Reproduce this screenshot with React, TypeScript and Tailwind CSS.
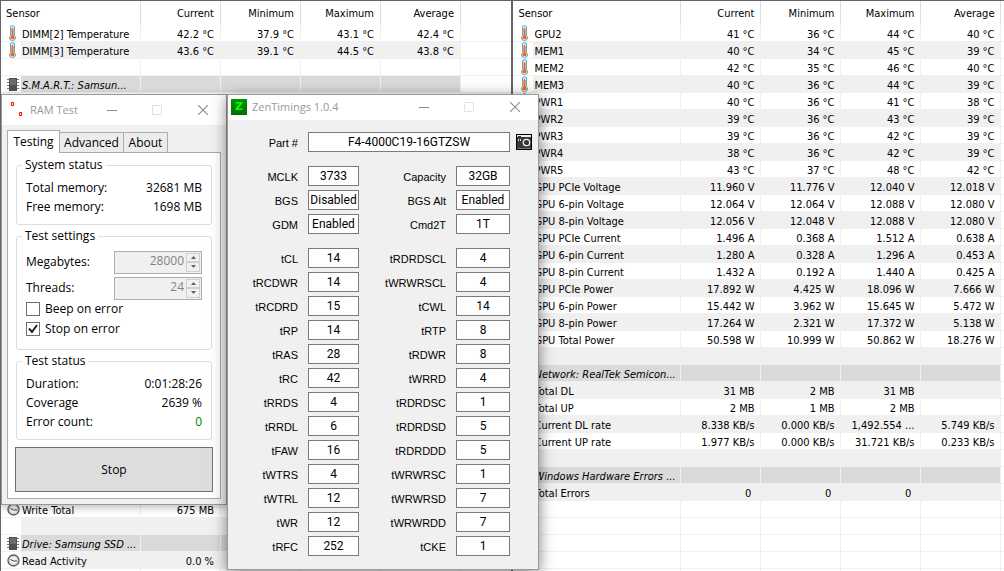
import type { ReactNode } from "react";
import clsx from "clsx";

type SensorIcon = "temp" | "chip" | "clock";

type SensorRow = {
  name?: string;
  icon?: SensorIcon;
  section?: boolean;
  values?: string[];
};

const ROW_COUNT = 33;

function blankRows(count: number): SensorRow[] {
  return Array.from({ length: count }, () => ({}));
}

const memorySensors: SensorRow[] = [
  { name: "DIMM[2] Temperature", icon: "temp", values: ["42.2 °C", "37.9 °C", "43.1 °C", "42.4 °C"] },
  { name: "DIMM[3] Temperature", icon: "temp", values: ["43.6 °C", "39.1 °C", "44.5 °C", "43.8 °C"] },
  {},
  { name: "S.M.A.R.T.: Samsun...", icon: "chip", section: true },
  { icon: "clock" },
  ...blankRows(23),
  { name: "Write Total", icon: "clock", values: ["675 MB"] },
  {},
  { name: "Drive: Samsung SSD ...", icon: "chip", section: true },
  { name: "Read Activity", icon: "clock", values: ["0.0 %"] },
  { icon: "clock" },
];

const gpuSensors: SensorRow[] = [
  { name: "GPU2", icon: "temp", values: ["41 °C", "36 °C", "44 °C", "40 °C"] },
  { name: "MEM1", icon: "temp", values: ["40 °C", "34 °C", "45 °C", "39 °C"] },
  { name: "MEM2", icon: "temp", values: ["42 °C", "35 °C", "46 °C", "40 °C"] },
  { name: "MEM3", icon: "temp", values: ["40 °C", "36 °C", "44 °C", "39 °C"] },
  { name: "PWR1", icon: "temp", values: ["40 °C", "36 °C", "41 °C", "38 °C"] },
  { name: "PWR2", icon: "temp", values: ["39 °C", "36 °C", "43 °C", "39 °C"] },
  { name: "PWR3", icon: "temp", values: ["39 °C", "36 °C", "42 °C", "39 °C"] },
  { name: "PWR4", icon: "temp", values: ["38 °C", "36 °C", "42 °C", "39 °C"] },
  { name: "PWR5", icon: "temp", values: ["43 °C", "37 °C", "48 °C", "42 °C"] },
  { name: "GPU PCIe Voltage", values: ["11.960 V", "11.776 V", "12.040 V", "12.018 V"] },
  { name: "GPU 6-pin Voltage", values: ["12.064 V", "12.064 V", "12.088 V", "12.080 V"] },
  { name: "GPU 8-pin Voltage", values: ["12.056 V", "12.048 V", "12.088 V", "12.080 V"] },
  { name: "GPU PCIe Current", values: ["1.496 A", "0.368 A", "1.512 A", "0.638 A"] },
  { name: "GPU 6-pin Current", values: ["1.280 A", "0.328 A", "1.296 A", "0.453 A"] },
  { name: "GPU 8-pin Current", values: ["1.432 A", "0.192 A", "1.440 A", "0.425 A"] },
  { name: "GPU PCIe Power", values: ["17.892 W", "4.425 W", "18.096 W", "7.666 W"] },
  { name: "GPU 6-pin Power", values: ["15.442 W", "3.962 W", "15.645 W", "5.472 W"] },
  { name: "GPU 8-pin Power", values: ["17.264 W", "2.321 W", "17.372 W", "5.138 W"] },
  { name: "GPU Total Power", values: ["50.598 W", "10.999 W", "50.862 W", "18.276 W"] },
  {},
  { name: "Network: RealTek Semicon...", section: true },
  { name: "Total DL", values: ["31 MB", "2 MB", "31 MB"] },
  { name: "Total UP", values: ["2 MB", "1 MB", "2 MB"] },
  { name: "Current DL rate", values: ["8.338 KB/s", "0.000 KB/s", "1,492.554 ...", "5.749 KB/s"] },
  { name: "Current UP rate", values: ["1.977 KB/s", "0.000 KB/s", "31.721 KB/s", "0.233 KB/s"] },
  {},
  { name: "Windows Hardware Errors ...", section: true },
  { name: "Total Errors", values: ["0\u00a0", "0\u00a0", "0\u00a0"] },
];

const topTimings = [
  ["MCLK", "3733", "Capacity", "32GB"],
  ["BGS", "Disabled", "BGS Alt", "Enabled"],
  ["GDM", "Enabled", "Cmd2T", "1T"],
];

const timings = [
  ["tCL", "14", "tRDRDSCL", "4"],
  ["tRCDWR", "14", "tWRWRSCL", "4"],
  ["tRCDRD", "15", "tCWL", "14"],
  ["tRP", "14", "tRTP", "8"],
  ["tRAS", "28", "tRDWR", "8"],
  ["tRC", "42", "tWRRD", "4"],
  ["tRRDS", "4", "tRDRDSC", "1"],
  ["tRRDL", "6", "tRDRDSD", "5"],
  ["tFAW", "16", "tRDRDDD", "5"],
  ["tWTRS", "4", "tWRWRSC", "1"],
  ["tWTRL", "12", "tWRWRSD", "7"],
  ["tWR", "12", "tWRWRDD", "7"],
  ["tRFC", "252", "tCKE", "1"],
];

function ThermometerIcon() {
  return (
    <svg width="7" height="16" viewBox="0 0 7 16" className="ml-2 block">
      <path d="M1.5 1.5Q3.500 -.5 5.500 1.500V10.500Q6.500 11.500 6.500 13Q6.500 15.500 3.500 15.500Q.5 15.500 .5 13Q.5 11.500 1.500 10.500Z" fill="#cfeaf6" stroke="#6fa3bd" />
      <path d="M3 3h1v7.500h1v1.500h.5v1.500H5V14H2v-.5h-.5V12H2v-1.500h1z" fill="#f60" />
      <path d="M2.500 4h2v7h-2z" fill="#f06a1c" />
    </svg>
  );
}

function ChipIcon() {
  return (
    <svg width="12" height="15" viewBox="0 0 12 15" className="ml-1.5 block">
      <path d="M0 2.500h12M0 5.500h12M0 8.500h12M0 11.500h12" stroke="#777" />
      <path d="M2 1h8v13H2z" fill="#505050" />
      <path d="M3 2h6v6H3z" fill="#6b6b6b" />
    </svg>
  );
}

function ClockIcon() {
  return (
    <svg width="13" height="13" viewBox="0 0 13 13" className="ml-1.5 block">
      <circle cx="6.500" cy="6.500" r="5.500" fill="#f2f2f2" stroke="#555" strokeWidth="1.300" />
      <circle cx="6.500" cy="6.500" r="4.200" fill="none" stroke="#bbb" strokeWidth=".8" />
      <path d="M3.500 5.500L6.500 7H10" fill="none" stroke="#444" />
    </svg>
  );
}

function RowIcon({ icon }: { icon?: SensorIcon }) {
  if (icon === "temp") return <ThermometerIcon />;
  if (icon === "chip") return <ChipIcon />;
  if (icon === "clock") return <ClockIcon />;
  return null;
}

type SensorTableProps = {
  rows: SensorRow[];
  striped: number;
  nameCol: string;
};

function SensorTable({ rows, striped, nameCol }: SensorTableProps) {
  const allRows = [...rows, ...blankRows(ROW_COUNT - rows.length)];

  return (
    <table className="w-full table-fixed border-separate border-spacing-0 whitespace-nowrap font-['DejaVu_Sans_Condensed','DejaVu_Sans',sans-serif] text-[11px] leading-3">
      <colgroup>
        <col className="w-5" />
        <col className={nameCol} />
        <col className="w-20" />
        <col className="w-20" />
        <col className="w-20" />
        <col className="w-20" />
        <col />
      </colgroup>
      <thead>
        <tr className="h-6">
          <th colSpan={2} className="border-r border-[#dedede] p-0 pt-0.5 pl-[5px] text-left font-normal">
            Sensor
          </th>
          {["Current", "Minimum", "Maximum", "Average"].map((title) => (
            <th key={title} className="border-r border-[#dedede] p-0 pt-0.5 pr-[6px] text-right font-normal">
              {title}
            </th>
          ))}
          <th className="p-0" />
        </tr>
      </thead>
      <tbody>
        {allRows.map((row, i) => {
          const cell = clsx(
            "border-r border-b border-[#f0f0f0] p-0 pt-[3px]",
            row.section ? "bg-[#dadada]" : i % 2 === 1 && i < striped && "bg-[#f0f0f0]"
          );
          return (
            <tr key={i} className="h-[17px]">
              <td className="border-b border-[#f0f0f0] p-0">
                <div className="flex h-4 items-center">
                  <RowIcon icon={row.icon} />
                </div>
              </td>
              <td className={clsx(cell, "pl-px", row.section && "italic")}>{row.name}</td>
              {[0, 1, 2, 3].map((col) => (
                <td key={col} className={clsx(cell, "pr-[6px] text-right")}>
                  {row.values?.[col]}
                </td>
              ))}
              <td className="border-b border-[#f0f0f0] p-0" />
            </tr>
          );
        })}
      </tbody>
    </table>
  );
}

function WindowButtons() {
  return (
    <div className="flex">
      <button type="button" aria-label="Minimize" className="flex h-6 w-11 items-center justify-center">
        <svg width="10" height="10" viewBox="0 0 10 10">
          <path d="M0 5.500h10" stroke="#8c8c8c" />
        </svg>
      </button>
      <button type="button" aria-label="Maximize" disabled className="flex h-6 w-[46px] items-center justify-center">
        <svg width="10" height="10" viewBox="0 0 10 10">
          <path d="M.5 .5h9v9h-9z" fill="none" stroke="#e2e2e2" />
        </svg>
      </button>
      <button type="button" aria-label="Close" className="flex h-6 w-[46px] items-center justify-center">
        <svg width="10" height="10" viewBox="0 0 10 10">
          <path d="M0 0l10 10M10 0L0 10" stroke="#8c8c8c" strokeWidth="1.100" />
        </svg>
      </button>
    </div>
  );
}

function Group({ title, className, children }: { title: string; className?: string; children: ReactNode }) {
  return (
    <fieldset className={clsx("mx-2 rounded-[3px] border border-[#d5dfe5] px-[9px]", className)}>
      <legend className="-ml-1 px-[3px] leading-4">{title}</legend>
      {children}
    </fieldset>
  );
}

function Stat({ label, value, good }: { label: string; value: string; good?: boolean }) {
  return (
    <div className="flex h-[19px] items-center justify-between">
      <span>{label}</span>
      <span className={good ? "text-[#008000]" : undefined}>{value}</span>
    </div>
  );
}

function NumberField({ id, label, value }: { id: string; label: string; value: number }) {
  return (
    <div className="flex h-[26px] items-center justify-between">
      <label htmlFor={id}>{label}</label>
      <div className="flex h-[23px] w-[88px] border border-[#abadb3] bg-[#f0f0f0] p-px">
        <input
          id={id}
          type="number"
          disabled
          defaultValue={value}
          className="h-4 w-full min-w-0 appearance-none text-right text-[#838383] [-moz-appearance:textfield] [&::-webkit-inner-spin-button]:hidden"
        />
        <div className="ml-0.5 flex w-[14px] shrink-0 flex-col">
          {["Increase", "Decrease"].map((action) => (
            <button
              key={action}
              type="button"
              disabled
              aria-label={`${action} ${label}`}
              className="flex flex-1 items-center justify-center border border-[#d0d0d0]"
            >
              <svg width="5" height="3" viewBox="0 0 5 3">
                <path d={action === "Increase" ? "M0 3h5L2.500 0z" : "M0 0h5L2.500 3z"} fill="#606060" />
              </svg>
            </button>
          ))}
        </div>
      </div>
    </div>
  );
}

function CheckField({ label, checked }: { label: string; checked?: boolean }) {
  return (
    <label className="flex h-5 items-center gap-[5px]">
      <span className="relative flex">
        <input
          type="checkbox"
          defaultChecked={checked}
          className="peer size-[14px] appearance-none border border-[#707070] bg-white"
        />
        <svg
          width="14"
          height="14"
          viewBox="0 0 14 14"
          className="pointer-events-none absolute inset-0 hidden peer-checked:block"
        >
          <path d="M3 6.500L6 10l5-7" fill="none" stroke="#212121" strokeWidth="2" />
        </svg>
      </span>
      {label}
    </label>
  );
}

function RamTestWindow() {
  const tab = "border border-b-0 border-[#acacac]";

  return (
    <section className="absolute top-[93px] left-0 w-[226px] border border-[#999] bg-[#f0f0f0] pb-[5px] font-['Open_Sans','Noto_Sans',sans-serif] text-[12px] leading-4 shadow-[0_2px_8px_rgba(0,0,0,0.3)]">
      <header className="flex h-[30px] items-center bg-white text-[#999]">
        <svg width="16" height="16" viewBox="0 0 16 16" className="ml-[7px] shrink-0">
          <path d="M2.500 .5h2v3h-2zM10.500 10.500h2v3h-2z" fill="none" stroke="#f00" />
        </svg>
        <h1 className="ml-[5px] grow whitespace-nowrap text-[11px]">RAM Test</h1>
        <WindowButtons />
      </header>
      <div role="tablist" className="mt-[5px] flex items-end pl-[5px]">
        <button type="button" role="tab" aria-selected className={clsx(tab, "z-10 -mb-px h-[23px] w-[53px] bg-white")}>
          Testing
        </button>
        <button type="button" role="tab" className={clsx(tab, "h-5 w-[64px] border-l-0 bg-[#ececec]")}>
          Advanced
        </button>
        <button type="button" role="tab" className={clsx(tab, "h-5 w-[44px] border-l-0 bg-[#ececec]")}>
          About
        </button>
      </div>
      <div className="mx-[5px] border border-[#acacac] bg-white pt-1 pb-[6px]">
        <Group title="System status" className="pb-2">
          <div className="pt-[5px]">
            <Stat label="Total memory:" value="32681 MB" />
            <Stat label="Free memory:" value="1698 MB" />
          </div>
        </Group>
        <Group title="Test settings" className="mt-[3px] pb-[10px]">
          <div className="pt-[5px]">
            <NumberField id="megabytes" label="Megabytes:" value={28000} />
            <NumberField id="threads" label="Threads:" value={24} />
            <div className="-mt-0.5">
              <CheckField label="Beep on error" />
              <CheckField label="Stop on error" checked />
            </div>
          </div>
        </Group>
        <Group title="Test status" className="mt-[3px] pb-2">
          <div className="pt-[5px]">
            <Stat label="Duration:" value="0:01:28:26" />
            <Stat label="Coverage" value="2639 %" />
            <Stat label="Error count:" value="0" good />
          </div>
        </Group>
        <div className="mx-[7px] mt-[7px] flex">
          <button type="button" className="h-[45px] grow border border-[#707070] bg-[#ddd]">
            Stop
          </button>
        </div>
      </div>
    </section>
  );
}

const fieldStyle =
  "h-5 w-full min-w-0 border border-[#7a7a7a] bg-white text-center font-['Roboto','Liberation_Sans',sans-serif] text-[12px]";

function TimingField({ label, value }: { label: string; value: string }) {
  return (
    <>
      <label htmlFor={label} className="pt-0.5 text-right">
        {label}
      </label>
      <input id={label} readOnly value={value} className={fieldStyle} />
    </>
  );
}

function TimingGrid({ rows }: { rows: string[][] }) {
  return (
    <div className="grid grid-cols-[60px_51px_77px_54px] items-center gap-x-[10px] gap-y-1">
      {rows.map(([leftLabel, leftValue, rightLabel, rightValue]) => [
        <TimingField key={leftLabel} label={leftLabel} value={leftValue} />,
        <TimingField key={rightLabel} label={rightLabel} value={rightValue} />,
      ])}
    </div>
  );
}

function ZenTimingsWindow() {
  return (
    <section className="absolute top-[93px] left-[226px] w-[312px] border border-[#999] bg-[#f0f0f0] shadow-[0_3px_14px_rgba(0,0,0,0.5)]">
      <header className="flex h-[25px] items-center bg-white pb-px font-['Open_Sans','Noto_Sans',sans-serif] text-[11px] text-[#999]">
        <span className="ml-[3px] flex size-4 shrink-0 items-center justify-center bg-linear-to-b from-[#009600] to-[#006e00] font-['DejaVu_Sans',sans-serif] font-bold text-[#0f0]">
          Z
        </span>
        <h1 className="ml-[5px] grow whitespace-nowrap">ZenTimings 1.0.4</h1>
        <WindowButtons />
      </header>
      <div className="flex flex-col gap-[14px] pt-3 pb-[13px] pl-[10px] font-['Liberation_Sans',Arial,sans-serif] text-[11px]">
        <div className="flex items-center gap-1.5">
          <div className="grid grid-cols-[60px_202px] items-center gap-x-[10px]">
            <TimingField label="Part #" value="F4-4000C19-16GTZSW" />
          </div>
          <button type="button" aria-label="Screenshot">
            <svg width="16" height="16" viewBox="0 0 16 16" className="block">
              <path d="M0 0h16v16H0z" fill="#000" />
              <path d="M1 1h14v2H1z" fill="#f0f0f0" />
              <path d="M1 3h14v12H1z" fill="#3a3a3a" />
              <path d="M2 2h3v1H2z" fill="#333" />
              <path d="M1 14h14v1H1z" fill="#777" />
              <path d="M2 5h1v2H2zM4 5h1v2H4z" fill="#ddd" />
              <circle cx="10.500" cy="8.500" r="3.200" fill="#333" stroke="#eee" strokeWidth="1.300" />
            </svg>
          </button>
        </div>
        <TimingGrid rows={topTimings} />
        <TimingGrid rows={timings} />
      </div>
    </section>
  );
}

export default function App() {
  return (
    <main className="relative grid h-screen grid-cols-[513fr_491fr] overflow-hidden border-t border-l border-[#646464] bg-white text-black">
      <div className="overflow-hidden border-r-2 border-[#646464]">
        <SensorTable rows={memorySensors} striped={ROW_COUNT} nameCol="w-[120px]" />
      </div>
      <div className="overflow-hidden">
        <SensorTable rows={gpuSensors} striped={28} nameCol="w-[148px]" />
      </div>
      <RamTestWindow />
      <ZenTimingsWindow />
    </main>
  );
}
